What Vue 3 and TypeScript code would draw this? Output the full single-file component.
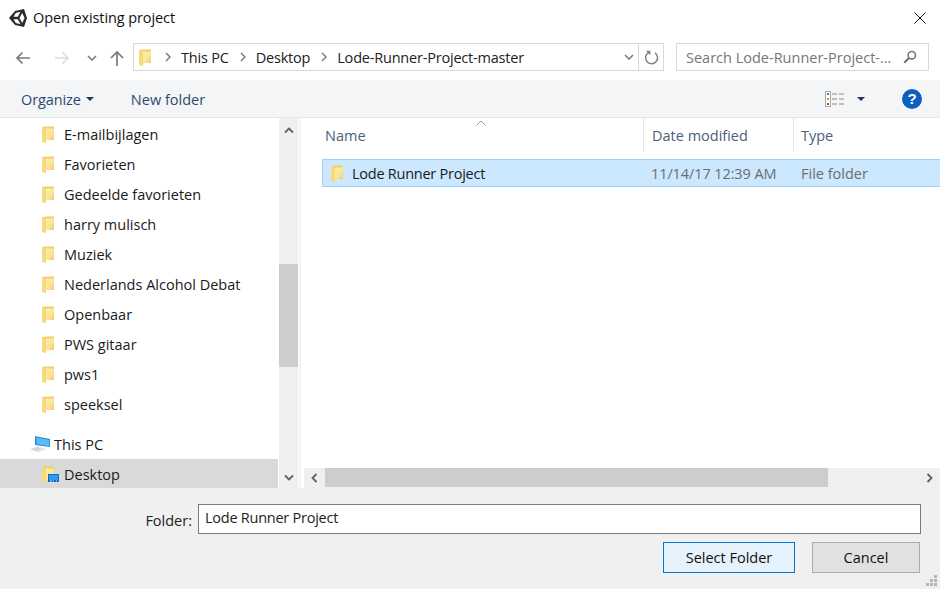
<script setup lang="ts">
// Windows "Open existing project" folder picker
const sideItems = [
  'E-mailbijlagen',
  'Favorieten',
  'Gedeelde favorieten',
  'harry mulisch',
  'Muziek',
  'Nederlands Alcohol Debat',
  'Openbaar',
  'PWS gitaar',
  'pws1',
  'speeksel',
];
const gripDots = [
  [8, 0],
  [4, 4],
  [8, 4],
  [0, 8],
  [4, 8],
  [8, 8],
];
</script>

<template>
  <div class="dialog">
    <svg class="sprites" width="0" height="0">
      <defs>
        <linearGradient id="fold" x1="0" y1="0" x2="1" y2="1">
          <stop offset="0" stop-color="#fdeeb0" />
          <stop offset=".6" stop-color="#fbe394" />
          <stop offset="1" stop-color="#f4c95c" />
        </linearGradient>
        <symbol id="folder" viewBox="0 0 12 17">
          <path d="M0 1 4.500 .5H12V14H4L3.500 17 0 15.500z" fill="#f5cf63" />
          <path d="M4 2.500H12V14H4z" fill="url(#fold)" />
          <path d="M0 1 3.500 2.500 4 14 3.500 17 0 15.500z" fill="#f8da7c" />
        </symbol>
      </defs>
    </svg>

    <header class="title">
      <svg class="unity" width="20" height="20" viewBox="0 0 20 20">
        <path d="M1 10 7 3l9-2 3 9-3 9-9-2z" fill="#2b2b2b" />
        <path d="M5.500 8.700 7.800 5l4.700-1.200-2.700 4.900zM14.200 5l2.400 5-2.400 5-2.700-5zM5.500 11.300 7.800 15l4.700 1.200-2.700-4.900z" fill="#fff" />
      </svg>
      <span class="title-text">Open existing project</span>
      <svg class="close" width="12" height="12" viewBox="0 0 12 12">
        <path d="M.5.5l11 11M11.500.5l-11 11" stroke="#111" stroke-width="1" fill="none" />
      </svg>
    </header>

    <nav class="nav">
      <div class="nav-btns">
        <svg class="nav-ico back" width="16" height="14" viewBox="0 0 16 14">
          <path d="M15 7H2M7.500 1.500 2 7l5.500 5.500" fill="none" stroke="#7a7a7a" stroke-width="1.700" />
        </svg>
        <svg class="nav-ico fwd" width="16" height="14" viewBox="0 0 16 14">
          <path d="M1 7h13M8.500 1.500 14 7l-5.500 5.500" fill="none" stroke="#dcdcdc" stroke-width="1.700" />
        </svg>
        <svg class="nav-ico down" width="10" height="6" viewBox="0 0 10 6">
          <path d="M1 1l4 4 4-4" fill="none" stroke="#7a7a7a" stroke-width="1.600" />
        </svg>
        <svg class="nav-ico up" width="14" height="16" viewBox="0 0 14 16">
          <path d="M7 16V2M1 8l6-6 6 6" fill="none" stroke="#7a7a7a" stroke-width="1.700" />
        </svg>
      </div>
      <div class="address">
        <div class="crumbs">
          <svg class="crumb-folder" width="12" height="17"><use href="#folder" /></svg>
          <svg class="chev" width="6" height="10" viewBox="0 0 6 10"><path d="M1 1l4 4-4 4" fill="none" stroke="#777" stroke-width="1.400" /></svg>
          <span>This PC</span>
          <svg class="chev" width="6" height="10" viewBox="0 0 6 10"><path d="M1 1l4 4-4 4" fill="none" stroke="#777" stroke-width="1.400" /></svg>
          <span>Desktop</span>
          <svg class="chev" width="6" height="10" viewBox="0 0 6 10"><path d="M1 1l4 4-4 4" fill="none" stroke="#777" stroke-width="1.400" /></svg>
          <span>Lode-Runner-Project-master</span>
        </div>
        <div class="addr-drop">
          <svg width="10" height="6" viewBox="0 0 10 6"><path d="M1 1l4 4 4-4" fill="none" stroke="#777" stroke-width="1.500" /></svg>
        </div>
        <div class="addr-refresh">
          <svg width="15" height="15" viewBox="0 0 15 15">
            <path d="M4.500 2.600A6 6 0 1 0 11 2.800" fill="none" stroke="#808080" stroke-width="1.500" />
            <path d="M1.800 .8h4.500v4.500z" fill="#808080" />
          </svg>
        </div>
      </div>
      <div class="search">
        <span class="search-text">Search Lode-Runner-Project-...</span>
        <svg width="14" height="14" viewBox="0 0 14 14">
          <circle cx="8.800" cy="5.200" r="3.700" fill="none" stroke="#777" stroke-width="1.600" />
          <path d="M6 8 1.200 12.800" stroke="#777" stroke-width="2.200" />
        </svg>
      </div>
    </nav>

    <div class="toolbar">
      <button class="tool organize">Organize<i class="caret" /></button>
      <button class="tool">New folder</button>
      <span class="tool-gap" />
      <svg class="view-ico" width="19" height="16" viewBox="0 0 19 16">
        <rect x=".5" y=".5" width="5" height="15" fill="#fff" stroke="#a9a9a9" />
        <rect x="2" y="2" width="2" height="2" fill="#3d8a9c" />
        <rect x="2" y="7" width="2" height="2" fill="#b5a33a" />
        <rect x="2" y="12" width="2" height="2" fill="#b2462e" />
        <path d="M7 3h5M14 3h5M7 8h5M14 8h5M7 13h5M14 13h5" stroke="#8a8a8a" />
      </svg>
      <i class="caret view-caret" />
      <div class="help">?</div>
    </div>

    <main class="body">
      <aside class="side">
        <ul class="tree">
          <li v-for="item in sideItems" :key="item" class="tree-row">
            <svg class="tree-folder" width="12" height="17"><use href="#folder" /></svg>
            <span>{{ item }}</span>
          </li>
          <li class="tree-row pc">
            <svg class="pc-ico" width="20" height="17" viewBox="0 0 20 17">
              <path d="M5 0 20 3v8L5 9z" fill="#2f8fdc" />
              <path d="M6.500 1.500 19 4v6L6.500 8z" fill="#5dbcf8" />
              <path d="M0 13 8 10.500l8 2.500-8 3.500z" fill="#e3e3e3" />
              <path d="M2 13.500l6-2M4 14.500l6-2" stroke="#c4c4c4" stroke-width=".7" />
            </svg>
            <span>This PC</span>
          </li>
          <li class="tree-row selected">
            <span class="desk-ico">
              <svg width="12" height="17"><use href="#folder" /></svg>
              <svg class="desk-badge" width="11" height="8" viewBox="0 0 11 8">
                <rect x="0" y="0" width="11" height="8" fill="#0f6cbd" />
                <rect x="1" y="1" width="9" height="5" fill="#2b9af0" />
                <path d="M2 7h2M5 7h1M8 7h1" stroke="#cfe6fa" />
              </svg>
            </span>
            <span>Desktop</span>
          </li>
        </ul>
        <div class="vscroll">
          <div class="sb-arrow top">
            <svg width="10" height="7" viewBox="0 0 10 7"><path d="M1 5.500 5 1.500l4 4" fill="none" stroke="#606060" stroke-width="1.800" /></svg>
          </div>
          <div class="v-thumb" />
          <div class="sb-arrow bottom">
            <svg width="10" height="7" viewBox="0 0 10 7"><path d="M1 1.500l4 4 4-4" fill="none" stroke="#606060" stroke-width="1.800" /></svg>
          </div>
        </div>
      </aside>
      <div class="split" />
      <section class="list">
        <div class="heads">
          <div class="head name-col">
            Name
            <svg class="sort" width="10" height="6" viewBox="0 0 10 6"><path d="M.5 5.500 5 1l4.500 4.500" fill="none" stroke="#9a9a9a" /></svg>
          </div>
          <div class="head date-col">Date modified</div>
          <div class="head type-col">Type</div>
        </div>
        <div class="files">
          <div class="file-row">
            <div class="file-name">
              <svg width="12" height="17"><use href="#folder" /></svg>
              <span>Lode Runner Project</span>
            </div>
            <div class="file-date">11/14/17 12:39 AM</div>
            <div class="file-type">File folder</div>
          </div>
        </div>
        <div class="hscroll">
          <div class="h-arrow">
            <svg width="7" height="10" viewBox="0 0 7 10"><path d="M5.500 1 1.500 5l4 4" fill="none" stroke="#606060" stroke-width="1.800" /></svg>
          </div>
          <div class="h-thumb" />
          <span class="h-rest" />
          <div class="h-arrow">
            <svg width="7" height="10" viewBox="0 0 7 10"><path d="M1.500 1l4 4-4 4" fill="none" stroke="#606060" stroke-width="1.800" /></svg>
          </div>
        </div>
      </section>
    </main>

    <footer class="foot">
      <div class="folder-line">
        <label class="folder-label">Folder:</label>
        <div class="folder-input">Lode Runner Project</div>
      </div>
      <div class="actions">
        <button class="btn primary">Select Folder</button>
        <button class="btn">Cancel</button>
      </div>
      <svg class="grip" width="12" height="12" viewBox="0 0 12 12">
        <rect v-for="d in gripDots" :key="d.join()" :x="d[0]" :y="d[1]" width="3" height="3" fill="#b5b5b5" />
      </svg>
    </footer>
  </div>
</template>

<style scoped>
.dialog {
  width: 940px;
  height: 589px;
  display: flex;
  flex-direction: column;
  background: #fff;
  color: #1a1a1a;
  font-family: "Open Sans", "Noto Sans", sans-serif;
  font-size: 14.5px;
  overflow: hidden;
}
.sprites {
  position: absolute;
}
.title {
  height: 35px;
  display: flex;
  align-items: center;
  padding: 0 14px 0 8px;
  flex: none;
}
.title-text {
  margin-left: 5px;
  color: #111;
  letter-spacing: -.1px;
}
.close {
  margin-left: auto;
}
.nav {
  height: 45px;
  flex: none;
  display: flex;
  align-items: flex-start;
}
.nav-btns {
  width: 133px;
  height: 45px;
  display: flex;
  align-items: center;
  flex: none;
  padding-left: 15px;
  box-sizing: border-box;
}
.fwd {
  margin-left: 23px;
}
.down {
  margin-left: 17px;
}
.up {
  margin-left: 13px;
}
.address {
  width: 531px;
  height: 28px;
  margin-top: 8px;
  box-sizing: border-box;
  border: 1px solid #d9d9d9;
  display: flex;
  align-items: center;
  flex: none;
}
.crumbs {
  flex: 1;
  display: flex;
  align-items: center;
  padding-left: 5px;
  color: #222;
  letter-spacing: -.2px;
}
.crumb-folder {
  margin-right: 14px;
}
.crumbs span {
  margin: 0 11px 0 10px;
}
.addr-drop {
  width: 19px;
  height: 100%;
  display: flex;
  align-items: center;
  justify-content: center;
}
.addr-refresh {
  width: 24px;
  height: 100%;
  border-left: 1px solid #d9d9d9;
  display: flex;
  align-items: center;
  justify-content: center;
}
.search {
  width: 253px;
  height: 28px;
  margin-top: 8px;
  box-sizing: border-box;
  margin-left: 12px;
  border: 1px solid #d9d9d9;
  display: flex;
  align-items: center;
  justify-content: space-between;
  padding: 0 11px 0 9px;
  color: #767676;
}
.toolbar {
  height: 38px;
  flex: none;
  box-sizing: border-box;
  background: #f4f5f7;
  border-bottom: 1px solid #e6e6e6;
  display: flex;
  align-items: center;
  padding: 1px 0 0 21px;
}
.tool {
  border: 0;
  padding: 0;
  background: none;
  font: inherit;
  color: #2d4a6e;
  display: flex;
  align-items: center;
}
.organize {
  margin-right: 37px;
  letter-spacing: -.1px;
}
.caret {
  display: block;
  width: 0;
  height: 0;
  border-left: 4px solid transparent;
  border-right: 4px solid transparent;
  border-top: 4px solid #1e395b;
  margin-left: 5px;
}
.tool-gap {
  flex: 1;
}
.view-caret {
  margin-left: 13px;
  margin-right: 37px;
}
.help {
  width: 20px;
  height: 20px;
  margin-right: 18px;
  border-radius: 50%;
  background: #0b5fc0;
  color: #fff;
  font-family: "Liberation Sans", sans-serif;
  font-weight: 700;
  font-size: 15px;
  line-height: 20px;
  text-align: center;
}
.body {
  height: 370px;
  flex: none;
  display: flex;
}
.side {
  width: 298px;
  flex: none;
  display: flex;
}
.tree {
  width: 279px;
  flex: none;
  margin: 0;
  padding: 1px 0 0;
  list-style: none;
}
.tree-row {
  height: 30px;
  display: flex;
  align-items: center;
  padding-left: 42px;
  box-sizing: border-box;
}
.tree-folder {
  margin-right: 10px;
}
.pc {
  margin-top: 10px;
  padding-left: 30px;
}
.pc-ico {
  margin-right: 4px;
}
.selected {
  background: #d9d9d9;
  height: 29px;
  width: 278px;
  padding-top: 2px;
}
.desk-ico {
  position: relative;
  display: flex;
  margin-right: 10px;
}
.desk-badge {
  position: absolute;
  left: 6px;
  top: 8px;
}
.vscroll {
  width: 19px;
  flex: none;
  background: #f0f0f0;
  display: flex;
  flex-direction: column;
}
.sb-arrow {
  height: 22px;
  display: flex;
  align-items: center;
  justify-content: center;
}
.top {
  height: 24px;
}
.v-thumb {
  height: 103px;
  margin-top: 122px;
  background: #cdcdcd;
}
.bottom {
  margin-top: auto;
}
.split {
  width: 2px;
  flex: none;
  margin-left: 1px;
  background: #f3f3f3;
}
.list {
  flex: 1;
  min-width: 0;
  display: flex;
  flex-direction: column;
}
.heads {
  height: 33px;
  flex: none;
  display: flex;
  color: #4c607a;
}
.head {
  box-sizing: border-box;
  display: flex;
  align-items: center;
  position: relative;
  padding-top: 1px;
}
.name-col {
  width: 343px;
  padding-left: 24px;
  border-right: 1px solid #e5e5e5;
}
.date-col {
  width: 150px;
  padding-left: 8px;
  border-right: 1px solid #e5e5e5;
}
.type-col {
  padding-left: 7px;
}
.sort {
  position: absolute;
  left: 175px;
  top: 2px;
}
.files {
  flex: 1;
  padding: 8px 0 0 21px;
}
.file-row {
  height: 28px;
  box-sizing: border-box;
  background: #cce8ff;
  border: 1px solid #99d1ff;
  border-right: 0;
  display: flex;
  align-items: center;
}
.file-name {
  width: 321px;
  flex: none;
  display: flex;
  align-items: center;
  gap: 9px;
  padding-left: 8px;
  box-sizing: border-box;
  letter-spacing: -.25px;
}
.file-date {
  width: 150px;
  flex: none;
  padding-left: 7px;
  box-sizing: border-box;
  color: #6d6d6d;
  letter-spacing: -.1px;
}
.file-type {
  color: #6d6d6d;
  padding-left: 7px;
}
.hscroll {
  height: 20px;
  flex: none;
  margin-left: 3px;
  background: #f0f0f0;
  display: flex;
  align-items: flex-start;
}
.h-arrow {
  width: 21px;
  height: 19px;
  flex: none;
  display: flex;
  align-items: center;
  justify-content: center;
}
.h-thumb {
  width: 503px;
  height: 19px;
  background: #cdcdcd;
  flex: none;
}
.h-rest {
  flex: 1;
}
.foot {
  flex: 1;
  background: #f0f0f0;
  position: relative;
}
.folder-line {
  display: flex;
  align-items: center;
  justify-content: flex-end;
  padding: 16px 19px 0 0;
}
.folder-label {
  margin-right: 6px;
  padding-top: 3px;
  color: #222;
}
.folder-input {
  width: 723px;
  height: 30px;
  box-sizing: border-box;
  border: 1px solid #7a7a7a;
  background: #fff;
  padding-left: 6px;
  line-height: 26px;
  color: #222;
  letter-spacing: -.25px;
}
.actions {
  display: flex;
  justify-content: flex-end;
  gap: 17px;
  padding: 8px 20px 0 0;
}
.btn {
  width: 108px;
  height: 31px;
  box-sizing: border-box;
  border: 1px solid #adadad;
  background: #e1e1e1;
  color: #111;
  font: inherit;
  padding: 0;
}
.primary {
  width: 132px;
  background: #e5f1fb;
  border-color: #0078d7;
}
.grip {
  position: absolute;
  right: 2px;
  bottom: 2px;
}
</style>

<style>
html,
body {
  margin: 0;
  background: #fff;
}
</style>
